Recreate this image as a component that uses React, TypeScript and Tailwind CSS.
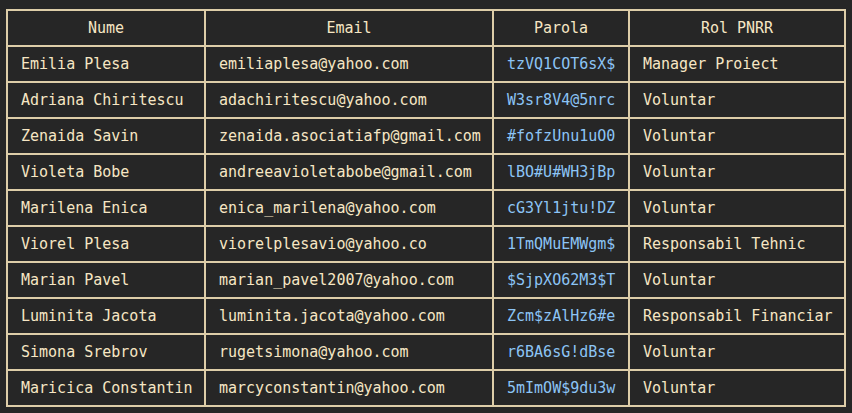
type Member = {
  name: string;
  email: string;
  password: string;
  role: string;
};

const members: Member[] = [
  { name: "Emilia Plesa", email: "emiliaplesa@yahoo.com", password: "tzVQ1COT6sX$", role: "Manager Proiect" },
  { name: "Adriana Chiritescu", email: "adachiritescu@yahoo.com", password: "W3sr8V4@5nrc", role: "Voluntar" },
  { name: "Zenaida Savin", email: "zenaida.asociatiafp@gmail.com", password: "#fofzUnu1uO0", role: "Voluntar" },
  { name: "Violeta Bobe", email: "andreeavioletabobe@gmail.com", password: "lBO#U#WH3jBp", role: "Voluntar" },
  { name: "Marilena Enica", email: "enica_marilena@yahoo.com", password: "cG3Yl1jtu!DZ", role: "Voluntar" },
  { name: "Viorel Plesa", email: "viorelplesavio@yahoo.co", password: "1TmQMuEMWgm$", role: "Responsabil Tehnic" },
  { name: "Marian Pavel", email: "marian_pavel2007@yahoo.com", password: "$SjpXO62M3$T", role: "Voluntar" },
  { name: "Luminita Jacota", email: "luminita.jacota@yahoo.com", password: "Zcm$zAlHz6#e", role: "Responsabil Financiar" },
  { name: "Simona Srebrov", email: "rugetsimona@yahoo.com", password: "r6BA6sG!dBse", role: "Voluntar" },
  { name: "Maricica Constantin", email: "marcyconstantin@yahoo.com", password: "5mImOW$9du3w", role: "Voluntar" },
];

const cell = "border-2 border-[#ddcda8] px-[13px] h-[36px] whitespace-nowrap";

export default function App() {
  return (
    <div className="min-h-[413px] w-[852px] bg-[#262626] pl-[6px] pt-[9px] font-['DejaVu_Sans_Mono',monospace] text-[15px] text-[#f6e6c4]">
      <table className="w-[838px] table-fixed border-collapse">
        <colgroup>
          <col className="w-[198px]" />
          <col className="w-[288px]" />
          <col className="w-[136px]" />
          <col className="w-[216px]" />
        </colgroup>
        <thead>
          <tr>
            <th className={`${cell} text-center font-normal`}>Nume</th>
            <th className={`${cell} text-center font-normal`}>Email</th>
            <th className={`${cell} text-center font-normal`}>Parola</th>
            <th className={`${cell} text-center font-normal`}>Rol PNRR</th>
          </tr>
        </thead>
        <tbody>
          {members.map((m) => (
            <tr key={m.email}>
              <td className={cell}>{m.name}</td>
              <td className={cell}>{m.email}</td>
              <td className={`${cell} text-[#8cc4f5]`}>{m.password}</td>
              <td className={cell}>{m.role}</td>
            </tr>
          ))}
        </tbody>
      </table>
    </div>
  );
}
